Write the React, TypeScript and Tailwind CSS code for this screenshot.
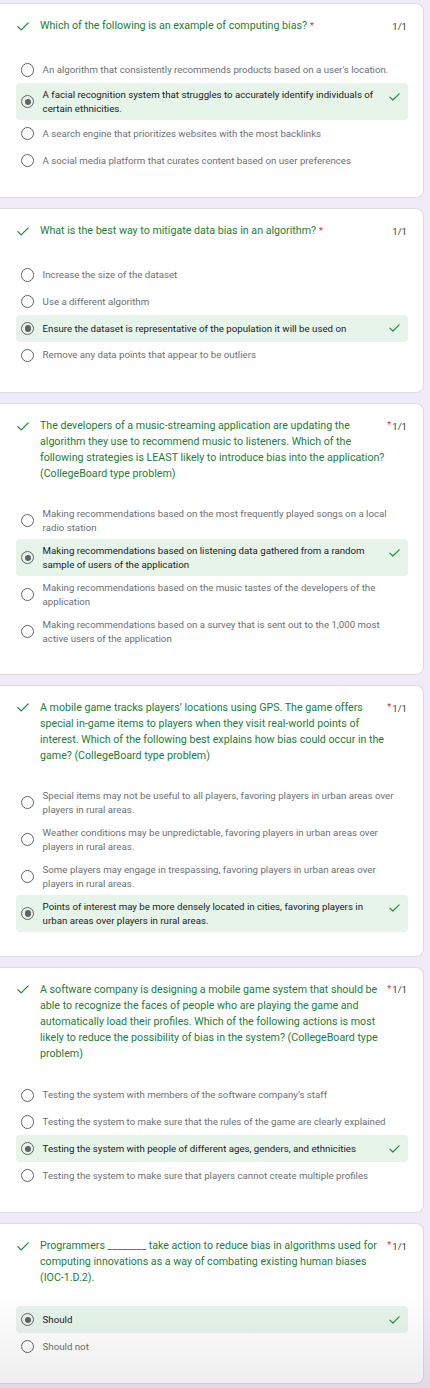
import React from "react";

type Q = {
  title: string;
  multi: boolean;
  options: string[];
  selected: number;
};

const questions: Q[] = [
  {
    title: "Which of the following is an example of computing bias?",
    multi: false,
    options: [
      "An algorithm that consistently recommends products based on a user's location.",
      "A facial recognition system that struggles to accurately identify individuals of certain ethnicities.",
      "A search engine that prioritizes websites with the most backlinks",
      "A social media platform that curates content based on user preferences",
    ],
    selected: 1,
  },
  {
    title: "What is the best way to mitigate data bias in an algorithm?",
    multi: false,
    options: [
      "Increase the size of the dataset",
      "Use a different algorithm",
      "Ensure the dataset is representative of the population it will be used on",
      "Remove any data points that appear to be outliers",
    ],
    selected: 2,
  },
  {
    title:
      "The developers of a music-streaming application are updating the algorithm they use to recommend music to listeners. Which of the following strategies is LEAST likely to introduce bias into the application? (CollegeBoard type problem)",
    multi: true,
    options: [
      "Making recommendations based on the most frequently played songs on a local radio station",
      "Making recommendations based on listening data gathered from a random sample of users of the application",
      "Making recommendations based on the music tastes of the developers of the application",
      "Making recommendations based on a survey that is sent out to the 1,000 most active users of the application",
    ],
    selected: 1,
  },
  {
    title:
      "A mobile game tracks players\u2019 locations using GPS. The game offers special in-game items to players when they visit real-world points of interest. Which of the following best explains how bias could occur in the game? (CollegeBoard type problem)",
    multi: true,
    options: [
      "Special items may not be useful to all players, favoring players in urban areas over players in rural areas.",
      "Weather conditions may be unpredictable, favoring players in urban areas over players in rural areas.",
      "Some players may engage in trespassing, favoring players in urban areas over players in rural areas.",
      "Points of interest may be more densely located in cities, favoring players in urban areas over players in rural areas.",
    ],
    selected: 3,
  },
  {
    title:
      "A software company is designing a mobile game system that should be able to recognize the faces of people who are playing the game and automatically load their profiles. Which of the following actions is most likely to reduce the possibility of bias in the system? (CollegeBoard type problem)",
    multi: true,
    options: [
      "Testing the system with members of the software company\u2019s staff",
      "Testing the system to make sure that the rules of the game are clearly explained",
      "Testing the system with people of different ages, genders, and ethnicities",
      "Testing the system to make sure that players cannot create multiple profiles",
    ],
    selected: 2,
  },
  {
    title:
      "Programmers ________ take action to reduce bias in algorithms used for computing innovations as a way of combating existing human biases (IOC-1.D.2).",
    multi: true,
    options: ["Should", "Should not"],
    selected: 0,
  },
];

function Check({ w = 12, h = 9 }: { w?: number; h?: number }) {
  return (
    <svg width={w} height={h} viewBox="0 0 12 9" fill="none">
      <polyline
        points="0.8,4.6 4.2,7.9 11.2,0.9"
        stroke="#1e8e3e"
        strokeWidth="1.3"
        strokeLinecap="round"
        strokeLinejoin="round"
      />
    </svg>
  );
}

function Radio({ on }: { on: boolean }) {
  return (
    <div className="h-[16.7px] flex items-center shrink-0">
      <div className="w-[13.3px] h-[13.3px] rounded-full border-[1.33px] border-[#5f6368] flex items-center justify-center">
        {on && <div className="w-[6.2px] h-[6.2px] rounded-full bg-[#5f6368]" />}
      </div>
    </div>
  );
}

function Option({ text, on }: { text: string; on: boolean }) {
  return (
    <div
      className={
        on
          ? "ml-[16px] w-[392px] pl-[5px] py-[5px] flex items-center rounded-[4px] bg-[#e6f4ea]"
          : "ml-[16px] w-[392px] pl-[5px] pr-[6px] py-[5px] flex items-center rounded-[4px]"
      }
    >
      <Radio on={on} />
      <div
        className={
          on
            ? "ml-[8.3px] flex-1 text-[9.7px] leading-[13.5px] text-[#202124]"
            : "ml-[8.3px] flex-1 text-[9.7px] leading-[13.5px] text-[#6b6f73]"
        }
      >
        {text}
      </div>
      {on && (
        <div className="w-[24px] h-[16.7px] self-start flex items-center pl-[5px] shrink-0">
          <Check w={11} h={8} />
        </div>
      )}
    </div>
  );
}

function Card({ q }: { q: Q }) {
  return (
    <div className="w-[424px] bg-white border border-l-0 border-[#dadce0] rounded-r-[8px] pt-[14px] pb-[23.5px]">
      <div className="flex items-start min-h-[18.3px] pr-[16px]">
        <div className="w-[40px] h-[16px] shrink-0 flex items-center pl-[17px]">
          <Check />
        </div>
        <div className="w-[345px] text-[10.67px] leading-[16px] text-[#188038]">
          {q.title}
          {!q.multi && <span className="text-[#d93025] text-[9px] align-top ml-[3px]">*</span>}
        </div>
        <div className="ml-auto h-[16px] flex items-center text-[9.6px] text-[#3c4043] pt-[2px]">
          {q.multi && (
            <span className="text-[#d93025] text-[9px] self-start -mt-[1px] mr-[1px]">*</span>
          )}
          <span>1/1</span>
        </div>
      </div>
      <div className="mt-[20.3px] flex flex-col">
        {q.options.map((o, i) => (
          <Option key={i} text={o} on={i === q.selected} />
        ))}
      </div>
    </div>
  );
}

export default function App() {
  return (
    <div
      className="relative w-[430px] h-[1388px] overflow-hidden bg-[#f0ebf8] pt-[3px] flex flex-col gap-[10px]"
      style={{ fontFamily: "Roboto, 'Noto Sans', Arial, sans-serif" }}
    >
      {questions.map((q, i) => (
        <Card key={i} q={q} />
      ))}
      <div className="pointer-events-none absolute left-0 right-0 bottom-0 h-[95px] bg-linear-to-b from-transparent to-[rgba(0,0,0,0.07)]" />
    </div>
  );
}
